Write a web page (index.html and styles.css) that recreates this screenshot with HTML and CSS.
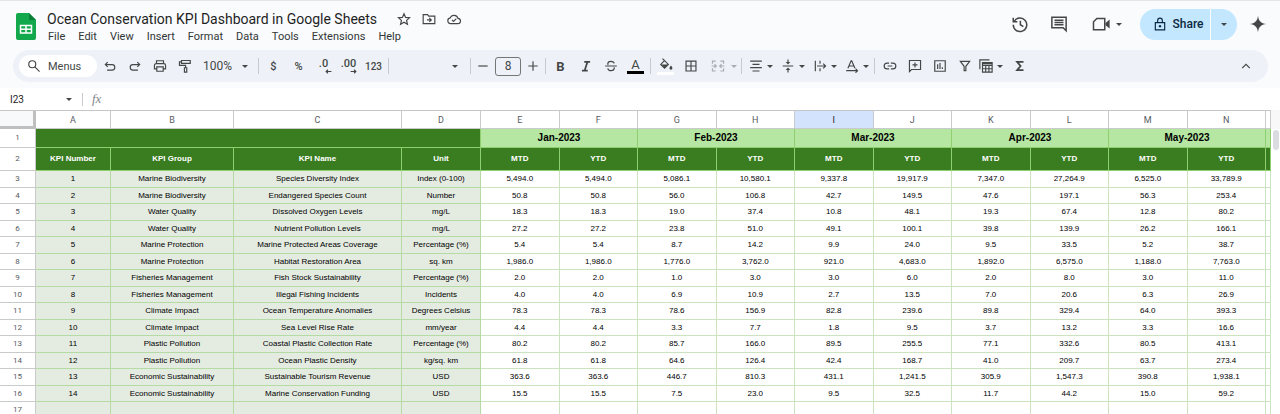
FILE: index.html
```html
<!DOCTYPE html>
<html lang="en">
<head>
  <meta charset="UTF-8">
  <title>Ocean Conservation KPI Dashboard in Google Sheets</title>
  <link rel="stylesheet" href="styles.css">
</head>
<body>
  <div class="app">
    <!-- Title bar -->
    <header class="titlebar">
      <svg class="logo" viewBox="0 0 20 27">
        <path d="M2 0h11l7 7v18a2 2 0 0 1-2 2H2a2 2 0 0 1-2-2V2a2 2 0 0 1 2-2z" fill="#12a84b"/>
        <path d="M13 0l7 7h-5.500a1.500 1.500 0 0 1-1.500-1.500z" fill="#0b7d36"/>
        <path d="M4.500 12.500h11v7.500h-11zM10 12.500v7.500M4.500 16.200h11" fill="none" stroke="#fff" stroke-width="1.500"/>
      </svg>
      <div class="doc">
        <div class="doc-title">
          <h1>Ocean Conservation KPI Dashboard in Google Sheets</h1>
          <button class="title-btn" aria-label="Star"><svg class="icon" viewBox="0 0 24 24"><path d="M12 3l2.700 6.200 6.800.600-5.100 4.500 1.500 6.600-5.900-3.500-5.900 3.500 1.500-6.600L2.500 9.800l6.800-.600z"/></svg></button>
          <button class="title-btn" aria-label="Move"><svg class="icon" viewBox="0 0 24 24"><path d="M2 4.500h7.500l2 2.500H22v13H2zM8.500 13.500h7M12.500 10l3.500 3.500-3.500 3.500"/></svg></button>
          <button class="title-btn" aria-label="Saved to Drive"><svg class="icon" viewBox="0 0 24 24"><path d="M6 20a5 5 0 0 1-.500-9.900A7 7 0 0 1 18.800 11 4.500 4.500 0 0 1 18.500 20zM8.500 13.500l2.700 2.700 4.800-4.800"/></svg></button>
        </div>
        <nav class="menus">
          <a href="#">File</a>
          <a href="#">Edit</a>
          <a href="#">View</a>
          <a href="#">Insert</a>
          <a href="#">Format</a>
          <a href="#">Data</a>
          <a href="#">Tools</a>
          <a href="#">Extensions</a>
          <a href="#">Help</a>
        </nav>
      </div>
      <div class="actions">
        <button class="action" aria-label="Version history"><svg class="icon big" viewBox="0 0 24 24"><path d="M4.200 8.500A9 9 0 1 1 3 13M3 3.500v5.500h5.500M12.500 7.500v5.500l4 2.500"/></svg></button>
        <button class="action" aria-label="Comments"><svg class="icon big" viewBox="0 0 24 24"><path d="M2.500 3h19v18l-4-4h-15zM6 7h12M6 10h12M6 13h12"/></svg></button>
        <button class="action meet" aria-label="Meet"><svg class="icon big" viewBox="0 0 24 24"><path d="M6.500 4.500h10.500v15h-15V9z"/><path class="fill" d="M18 10.500l5.500-4.500v12L18 13.500z"/></svg><span class="caret"></span></button>
        <div class="share-group">
          <button class="share"><svg class="icon lock" viewBox="0 0 24 24"><path d="M4 9.500h16v12.500H4zM8 9.500V6a4 4 0 0 1 8 0v3.500"/><circle class="fill" cx="12" cy="15.700" r="2"/></svg>Share</button>
          <button class="share-more" aria-label="Share options"><span class="caret"></span></button>
        </div>
        <button class="action spark" aria-label="Gemini"><svg class="icon big" viewBox="0 0 24 24"><path class="fill" d="M12 1c.800 7 4 10.200 11 11-7 .800-10.200 4-11 11-.800-7-4-10.200-11-11 7-.800 10.200-4 11-11z"/></svg></button>
      </div>
    </header>

    <!-- Toolbar -->
    <div class="toolbar-wrap">
      <div class="toolbar">
        <label class="search">
          <svg class="icon" viewBox="0 0 24 24"><circle cx="9" cy="9" r="6"/><path d="M13.500 13.500L21.500 21.500"/></svg>
          <input type="text" placeholder="Menus" aria-label="Menus">
        </label>
        <button class="tool" aria-label="Undo"><svg class="icon" viewBox="0 0 24 24"><path d="M8 5.500L4 9.500l4 4M4.500 9.500h11a4.500 4.500 0 0 1 0 9.500H7"/></svg></button>
        <button class="tool" aria-label="Redo"><svg class="icon" viewBox="0 0 24 24"><path d="M16 5.500l4 4-4 4M19.500 9.500h-11a4.500 4.500 0 0 0 0 9.500H17"/></svg></button>
        <button class="tool" aria-label="Print"><svg class="icon" viewBox="0 0 24 24"><path d="M6 8V3h12v5M6 17H2.500v-6a3 3 0 0 1 3-3h13a3 3 0 0 1 3 3v6H18M6.500 13.500h11v7.500h-11z"/></svg></button>
        <button class="tool" aria-label="Paint format"><svg class="icon" viewBox="0 0 24 24"><path d="M6 2.500h15v5H6zM6 5H2.500v6H13v4M11 15h4v7.500h-4z"/></svg></button>
        <label class="drop zoom">
          <select aria-label="Zoom"><option>100%</option><option>75%</option><option>50%</option></select>
        </label>
        <span class="sep"></span>
        <button class="tool text">$</button>
        <button class="tool text">%</button>
        <button class="tool text decimal" aria-label="Decrease decimal places"><span>.0</span><svg class="icon arrow" viewBox="0 0 12 8"><path d="M5 1L2 4l3 3M2 4h9"/></svg></button>
        <button class="tool text decimal" aria-label="Increase decimal places"><span>.00</span><svg class="icon arrow" viewBox="0 0 12 8"><path d="M7 1l3 3-3 3M10 4H1"/></svg></button>
        <button class="tool text small">123</button>
        <span class="sep"></span>
        <label class="drop font">
          <select aria-label="Font"><option></option><option>Arial</option></select>
        </label>
        <span class="sep"></span>
        <button class="step" aria-label="Decrease font size"><svg class="icon" viewBox="0 0 24 24"><path d="M4 12h16"/></svg></button>
        <input class="size" type="text" value="8" aria-label="Font size">
        <button class="step" aria-label="Increase font size"><svg class="icon" viewBox="0 0 24 24"><path d="M4 12h16M12 4v16"/></svg></button>
        <span class="sep"></span>
        <button class="tool glyph bold">B</button>
        <button class="tool" aria-label="Italic"><svg class="icon heavy" viewBox="0 0 24 24"><path d="M9 5h10M5 20h10M14.500 5l-5 15"/></svg></button>
        <button class="tool" aria-label="Strikethrough"><svg class="icon" viewBox="0 0 24 24"><path d="M2 12h20M17.500 7.500C17 5 15 4 12 4S6.500 5.200 6.500 8c0 1 .400 1.600 1 2M6.500 16c.500 3 2.500 4 5.500 4s5.500-1.200 5.500-4c0-.700-.200-1.200-.500-1.600"/></svg></button>
        <button class="tool glyph color-a"><span>A</span></button>
        <span class="sep"></span>
        <button class="tool fill-color" aria-label="Fill color"><svg class="icon" viewBox="0 0 24 24"><path d="M6 1l3.500 3.500M9.500 4.500l6.500 6.500-6.500 6.500L3 11z"/><path class="fill" d="M4 11h12l-6.500 6.500zM20.500 13s2.500 3 2.500 4.500a2.500 2.500 0 0 1-5 0c0-1.500 2.500-4.500 2.500-4.500z"/></svg></button>
        <button class="tool" aria-label="Borders"><svg class="icon" viewBox="0 0 24 24"><path d="M3.500 3.500h17v17h-17zM12 3.500v17M3.500 12h17"/></svg></button>
        <button class="tool-menu merge" aria-label="Merge cells" disabled><svg class="icon" viewBox="0 0 24 24"><path d="M8 3.500H2.500V8M16 3.500h5.500V8M8 20.500H2.500V16M16 20.500h5.500V16M1 12h8M23 12h-8M6 9l3 3-3 3M18 9l-3 3 3 3"/></svg><span class="caret"></span></button>
        <span class="sep"></span>
        <button class="tool-menu" aria-label="Horizontal align"><svg class="icon" viewBox="0 0 24 24"><path d="M2 3.500h20M6 9.200h12M2 14.800h20M6 20.500h12"/></svg><span class="caret"></span></button>
        <button class="tool-menu" aria-label="Vertical align"><svg class="icon" viewBox="0 0 24 24"><path d="M3 12h18M12 1v6M12 23v-6"/><path class="fill" d="M8 5h8l-4 4.500zM8 19h8l-4-4.500z"/></svg><span class="caret"></span></button>
        <button class="tool-menu" aria-label="Text wrapping"><svg class="icon" viewBox="0 0 24 24"><path d="M4 3v18M12 3v5M12 16v5M7 12h14M17.500 8l4 4-4 4"/></svg><span class="caret"></span></button>
        <button class="tool-menu" aria-label="Text rotation"><svg class="icon" viewBox="0 0 24 24"><path d="M5 16l5.500-13h1L17 16M7 12h8M2 20h18M18 16.500l3.500 3.500-3.500 3.500"/></svg><span class="caret"></span></button>
        <span class="sep"></span>
        <button class="tool" aria-label="Insert link"><svg class="icon" viewBox="0 0 24 24"><path d="M10.500 7H7a5 5 0 0 0 0 10h3.500M13.500 7H17a5 5 0 0 1 0 10h-3.500M8 12h8"/></svg></button>
        <button class="tool" aria-label="Insert comment"><svg class="icon" viewBox="0 0 24 24"><path d="M2.500 2.500h19v15.500H6l-3.500 3.500zM12 6v8.500M7.700 10.200h8.600"/></svg></button>
        <button class="tool" aria-label="Insert chart"><svg class="icon" viewBox="0 0 24 24"><path d="M3 3h18v18H3zM8 9v8M12 7v10M16 14v3"/></svg></button>
        <button class="tool" aria-label="Create a filter"><svg class="icon" viewBox="0 0 24 24"><path d="M4 4h16l-6.500 8.500V20h-3v-7.500z"/></svg></button>
        <button class="tool-menu tables" aria-label="Tables"><svg class="icon" viewBox="0 0 24 24"><path d="M1.500 17.500V1.500H18M6 6h16.500v16.500H6zM6 11h16.500M6 16.700h16.500M11.500 11v11.500M17 11v11.500"/><path class="fill" d="M6 6h16.500v3H6z"/></svg><span class="caret"></span></button>
        <button class="tool" aria-label="Functions"><svg class="icon heavy" viewBox="0 0 24 24"><path d="M18 5H7l6 7-6 7h11"/></svg></button>
        <button class="tool collapse" aria-label="Hide the menus"><svg class="icon" viewBox="0 0 24 24"><path d="M5.500 15.500L12 9l6.500 6.500"/></svg></button>
      </div>
    </div>

    <!-- Name box and formula bar -->
    <div class="formula-bar">
      <label class="drop name-box"><input type="text" value="I23" aria-label="Name box"></label>
      <label class="fx" for="formula">fx</label>
      <input id="formula" class="formula" type="text">
    </div>

    <!-- Sheet -->
    <div class="sheet">
      <table class="grid">
        <colgroup>
          <col class="c-row"><col class="c-a"><col class="c-b"><col class="c-c"><col class="c-d">
          <col span="10">
          <col class="c-o">
        </colgroup>
        <thead>
          <tr>
            <th class="corner"></th>
            <th>A</th><th>B</th><th>C</th><th>D</th><th>E</th><th>F</th><th>G</th><th>H</th>
            <th class="selected">I</th><th>J</th><th>K</th><th>L</th><th>M</th><th>N</th><th></th>
          </tr>
        </thead>
        <tbody>
          <tr class="months"><th>1</th><td class="blank" colspan="4"></td><td colspan="2">Jan-2023</td><td colspan="2">Feb-2023</td><td colspan="2">Mar-2023</td><td colspan="2">Apr-2023</td><td colspan="2">May-2023</td><td></td></tr>
          <tr class="heads"><th>2</th><td>KPI Number</td><td>KPI Group</td><td>KPI Name</td><td>Unit</td><td>MTD</td><td>YTD</td><td>MTD</td><td>YTD</td><td>MTD</td><td>YTD</td><td>MTD</td><td>YTD</td><td>MTD</td><td>YTD</td><td></td></tr>
          <tr><th>3</th><td>1</td><td>Marine Biodiversity</td><td>Species Diversity Index</td><td>Index (0-100)</td><td>5,494.0</td><td>5,494.0</td><td>5,086.1</td><td>10,580.1</td><td>9,337.8</td><td>19,917.9</td><td>7,347.0</td><td>27,264.9</td><td>6,525.0</td><td>33,789.9</td><td></td></tr>
          <tr><th>4</th><td>2</td><td>Marine Biodiversity</td><td>Endangered Species Count</td><td>Number</td><td>50.8</td><td>50.8</td><td>56.0</td><td>106.8</td><td>42.7</td><td>149.5</td><td>47.6</td><td>197.1</td><td>56.3</td><td>253.4</td><td></td></tr>
          <tr><th>5</th><td>3</td><td>Water Quality</td><td>Dissolved Oxygen Levels</td><td>mg/L</td><td>18.3</td><td>18.3</td><td>19.0</td><td>37.4</td><td>10.8</td><td>48.1</td><td>19.3</td><td>67.4</td><td>12.8</td><td>80.2</td><td></td></tr>
          <tr><th>6</th><td>4</td><td>Water Quality</td><td>Nutrient Pollution Levels</td><td>mg/L</td><td>27.2</td><td>27.2</td><td>23.8</td><td>51.0</td><td>49.1</td><td>100.1</td><td>39.8</td><td>139.9</td><td>26.2</td><td>166.1</td><td></td></tr>
          <tr><th>7</th><td>5</td><td>Marine Protection</td><td>Marine Protected Areas Coverage</td><td>Percentage (%)</td><td>5.4</td><td>5.4</td><td>8.7</td><td>14.2</td><td>9.9</td><td>24.0</td><td>9.5</td><td>33.5</td><td>5.2</td><td>38.7</td><td></td></tr>
          <tr><th>8</th><td>6</td><td>Marine Protection</td><td>Habitat Restoration Area</td><td>sq. km</td><td>1,986.0</td><td>1,986.0</td><td>1,776.0</td><td>3,762.0</td><td>921.0</td><td>4,683.0</td><td>1,892.0</td><td>6,575.0</td><td>1,188.0</td><td>7,763.0</td><td></td></tr>
          <tr><th>9</th><td>7</td><td>Fisheries Management</td><td>Fish Stock Sustainability</td><td>Percentage (%)</td><td>2.0</td><td>2.0</td><td>1.0</td><td>3.0</td><td>3.0</td><td>6.0</td><td>2.0</td><td>8.0</td><td>3.0</td><td>11.0</td><td></td></tr>
          <tr><th>10</th><td>8</td><td>Fisheries Management</td><td>Illegal Fishing Incidents</td><td>Incidents</td><td>4.0</td><td>4.0</td><td>6.9</td><td>10.9</td><td>2.7</td><td>13.5</td><td>7.0</td><td>20.6</td><td>6.3</td><td>26.9</td><td></td></tr>
          <tr><th>11</th><td>9</td><td>Climate Impact</td><td>Ocean Temperature Anomalies</td><td>Degrees Celsius</td><td>78.3</td><td>78.3</td><td>78.6</td><td>156.9</td><td>82.8</td><td>239.6</td><td>89.8</td><td>329.4</td><td>64.0</td><td>393.3</td><td></td></tr>
          <tr><th>12</th><td>10</td><td>Climate Impact</td><td>Sea Level Rise Rate</td><td>mm/year</td><td>4.4</td><td>4.4</td><td>3.3</td><td>7.7</td><td>1.8</td><td>9.5</td><td>3.7</td><td>13.2</td><td>3.3</td><td>16.6</td><td></td></tr>
          <tr><th>13</th><td>11</td><td>Plastic Pollution</td><td>Coastal Plastic Collection Rate</td><td>Percentage (%)</td><td>80.2</td><td>80.2</td><td>85.7</td><td>166.0</td><td>89.5</td><td>255.5</td><td>77.1</td><td>332.6</td><td>80.5</td><td>413.1</td><td></td></tr>
          <tr><th>14</th><td>12</td><td>Plastic Pollution</td><td>Ocean Plastic Density</td><td>kg/sq. km</td><td>61.8</td><td>61.8</td><td>64.6</td><td>126.4</td><td>42.4</td><td>168.7</td><td>41.0</td><td>209.7</td><td>63.7</td><td>273.4</td><td></td></tr>
          <tr><th>15</th><td>13</td><td>Economic Sustainability</td><td>Sustainable Tourism Revenue</td><td>USD</td><td>363.6</td><td>363.6</td><td>446.7</td><td>810.3</td><td>431.1</td><td>1,241.5</td><td>305.9</td><td>1,547.3</td><td>390.8</td><td>1,938.1</td><td></td></tr>
          <tr><th>16</th><td>14</td><td>Economic Sustainability</td><td>Marine Conservation Funding</td><td>USD</td><td>15.5</td><td>15.5</td><td>7.5</td><td>23.0</td><td>9.5</td><td>32.5</td><td>11.7</td><td>44.2</td><td>15.0</td><td>59.2</td><td></td></tr>
          <tr><th>17</th><td></td><td></td><td></td><td></td><td></td><td></td><td></td><td></td><td></td><td></td><td></td><td></td><td></td><td></td><td></td></tr>
        </tbody>
      </table>
      <div class="scroll-track"><div class="scroll-thumb"></div></div>
    </div>
  </div>
</body>
</html>
```

FILE: styles.css
```css
* {
  box-sizing: border-box;
}
body {
  margin: 0;
  background: #fff;
  color: #444746;
  font-family: Roboto, Arial, sans-serif;
  font-size: 12px;
}
button, input, select {
  font: inherit;
  color: inherit;
  background: none;
  border: none;
  padding: 0;
  margin: 0;
  outline: none;
}
button {
  cursor: pointer;
}
.app {
  height: 100vh;
  overflow: hidden;
  border-top: 1px solid #e3e5e8;
}

/* Icons */
.icon {
  width: 14px;
  height: 14px;
  flex: none;
  fill: none;
  stroke: #444746;
  stroke-width: 2;
}
.icon.big {
  width: 18px;
  height: 18px;
}
.icon.heavy {
  stroke-width: 3;
}
.icon .fill {
  fill: #444746;
  stroke: none;
}
.caret, .drop::after {
  border: 3px solid transparent;
  border-top-color: #444746;
  border-bottom: none;
}

/* Title bar */
.titlebar {
  display: flex;
  height: 49px;
  padding: 0 13px 0 16px;
  background: #f9fbfd;
}
.logo {
  width: 20px;
  height: 27px;
  margin-top: 12px;
}
.doc {
  margin-left: 11px;
  padding-top: 8px;
}
.doc-title {
  display: flex;
  align-items: center;
  height: 20px;
}
h1 {
  margin: 0 14px 0 0;
  font-size: 14px;
  font-weight: 400;
  color: #1f1f1f;
}
.title-btn {
  display: flex;
  justify-content: center;
  width: 25px;
}
.menus {
  display: flex;
  gap: 13px;
  margin-left: 1px;
  font-size: 11px;
  line-height: 16px;
}
.menus a {
  color: #333635;
  text-decoration: none;
}
.actions {
  display: flex;
  align-items: center;
  height: 46px;
  margin-left: auto;
}
.action {
  display: flex;
  align-items: center;
  justify-content: center;
  width: 39px;
}
.action.meet {
  gap: 6px;
  width: 62px;
  padding-right: 4px;
}
.action.spark {
  width: 18px;
  margin-left: 12px;
}
.share-group {
  display: flex;
  gap: 1px;
  height: 31px;
}
.share, .share-more {
  display: flex;
  align-items: center;
  justify-content: center;
  background: #c2e7ff;
  color: #0b2a3f;
}
.share {
  gap: 6px;
  width: 70px;
  padding-left: 6px;
  border-radius: 16px 0 0 16px;
  font-weight: 500;
}
.share-more {
  width: 26px;
  border-radius: 0 16px 16px 0;
}
.share .lock {
  stroke: #0b2a3f;
}
.share .lock .fill {
  fill: #0b2a3f;
}

/* Toolbar */
.toolbar-wrap {
  padding: 0 12px 6px 13px;
  background: #f9fbfd;
}
.toolbar {
  display: flex;
  align-items: center;
  height: 32px;
  padding: 0 10px 0 6px;
  border-radius: 16px;
  background: #eef2f8;
}
.search {
  display: flex;
  align-items: center;
  gap: 7px;
  width: 78px;
  height: 22px;
  padding-left: 8px;
  border-radius: 11px;
  background: #fff;
  font-size: 11px;
}
.search input {
  width: 44px;
}
.search input::placeholder {
  color: #444746;
  opacity: 1;
}
.tool, .step {
  display: flex;
  align-items: center;
  justify-content: center;
  flex: none;
  width: 25px;
  height: 24px;
}
.step {
  width: 20px;
}
.tool.text {
  font-size: 11px;
  font-weight: 500;
}
.tool.small {
  font-size: 10px;
}
.tool.decimal {
  flex-direction: column;
  line-height: 10px;
}
.decimal .arrow {
  width: 7px;
  height: 5px;
  align-self: flex-end;
  margin-right: 4px;
}
.tool.glyph {
  font-size: 13px;
}
.tool.bold {
  font-weight: 700;
}
.color-a span {
  width: 17px;
  border-bottom: 3px solid #000;
  line-height: 13px;
}
.fill-color {
  flex-direction: column;
}
.fill-color::after {
  content: "";
  width: 17px;
  height: 3px;
  background: #fff;
}
.sep {
  flex: none;
  width: 1px;
  height: 16px;
  margin: 0 2px;
  background: #c7cbd1;
}
.drop {
  display: flex;
  align-items: center;
}
.drop::after {
  content: "";
}
.drop select, .drop input {
  flex: 1;
  min-width: 0;
  appearance: none;
}
.zoom {
  width: 59px;
  padding: 0 8px 0 6px;
}
.font {
  width: 77px;
  padding-right: 10px;
}
.size {
  flex: none;
  width: 26px;
  height: 19px;
  margin: 0 2px;
  border: 1px solid #747775;
  border-radius: 3px;
  text-align: center;
}
.tool-menu {
  display: flex;
  align-items: center;
  flex: none;
  gap: 4px;
  width: 32px;
  height: 24px;
  padding-left: 5px;
}
.tool-menu.merge {
  gap: 6px;
  width: 36px;
  padding-left: 8px;
  opacity: 0.4;
}
.tool-menu.tables {
  width: 30px;
  padding-left: 2px;
}
.collapse {
  margin-left: auto;
}

/* Formula bar */
.formula-bar {
  display: flex;
  align-items: center;
  height: 22px;
}
.name-box {
  width: 83px;
  height: 13px;
  padding: 0 10px;
  border-right: 1px solid #c7cbd1;
  color: #1f1f1f;
  font-size: 10px;
}
.fx {
  width: 28px;
  padding-left: 9px;
  color: #80868b;
  font-family: "Liberation Serif", "Times New Roman", serif;
  font-size: 13px;
  font-style: italic;
}
.formula {
  flex: 1;
}

/* Sheet */
.sheet {
  display: flex;
}
.grid {
  flex: 1;
  width: 0;
  table-layout: fixed;
  border-collapse: separate;
  border-spacing: 0;
  border-top: 1px solid #c4c7c5;
  font-family: "Liberation Sans", Arial, sans-serif;
  font-size: 8px;
  line-height: 10px;
  text-align: center;
  color: #000;
}
.c-row { width: 36px; }
.c-a { width: 75px; }
.c-b { width: 123px; }
.c-c { width: 168px; }
.c-d { width: 79px; }
.c-o { width: 5px; }
.grid th, .grid td {
  height: 16px;
  padding: 0;
  border: 0 solid #cbe4bf;
  border-width: 0 1px 1px 0;
  white-space: nowrap;
}
.grid th {
  border-color: #c8cacc;
  color: #575b5f;
  font-family: Roboto, Arial, sans-serif;
  font-weight: 400;
}
.grid thead th {
  height: 18px;
  font-size: 9px;
}
.grid thead .corner {
  border: 0 solid #bfbfbf;
  border-width: 0 3px 3px 0;
  background: #f8f9fa;
}
.grid thead .selected {
  background: #d3e3fd;
  color: #1f1f1f;
}
.grid tbody tr:nth-child(odd) th,
.grid tbody tr:nth-child(odd) td {
  height: 17px;
}
.grid tbody td:nth-child(-n+5) {
  background: #e4ebe1;
  border-color: #b3dba3;
}
.grid tbody tr.months th,
.grid tbody tr.months td {
  height: 19px;
}
.grid tbody tr.months td {
  background: #b5e6a2;
  border-color: #8fcf70;
  font-size: 10px;
  font-weight: 700;
}
.grid tbody tr.months .blank {
  background: #3a7d20;
}
.grid tbody tr.heads th,
.grid tbody tr.heads td {
  height: 23px;
}
.grid tbody tr.heads td {
  background: #3a7d20;
  border-color: #8fcf70;
  color: #fff;
  font-weight: 700;
}
.scroll-track {
  width: 9px;
  border-top: 19px solid #f8f8f8;
}
.scroll-thumb {
  width: 6px;
  height: 20px;
  margin: 1px 0 0 2px;
  border-radius: 3px;
  background: #dadce0;
}
```
